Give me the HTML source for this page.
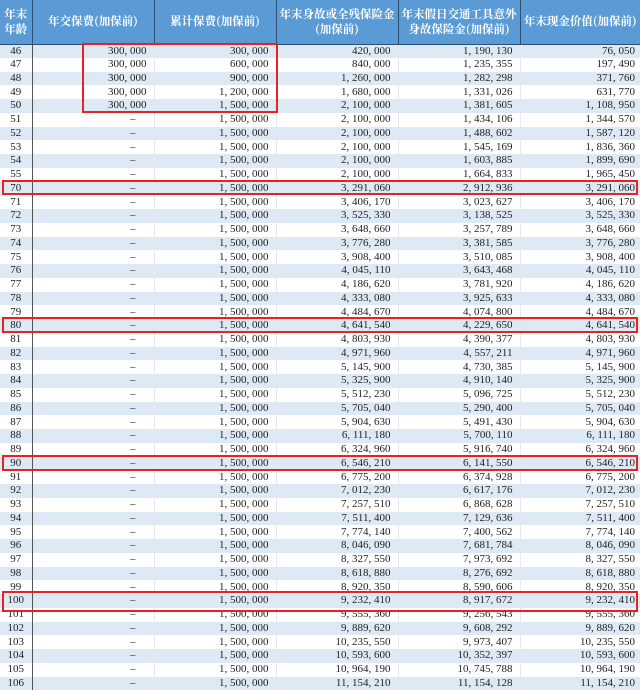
<!DOCTYPE html>
<html><head><meta charset="utf-8"><style>
*{margin:0;padding:0;box-sizing:border-box}
body{width:640px;height:688px;overflow:hidden;background:#fff;position:relative;font-family:"Liberation Serif","Noto Serif CJK SC",serif}
table{border-collapse:collapse;table-layout:fixed;position:absolute;left:0;top:0;width:640px}
th{background:#5b9bd5;color:#fff;font-family:"Noto Serif CJK SC","Liberation Serif",serif;font-size:11.5px;font-weight:bold;height:44px;line-height:15px;border-left:1px solid #2f4f75;border-bottom:1.5px solid #2f4f75;text-align:center}
th:first-child{border-left:none}
tr.r{height:13.75px}
td{height:13.75px;font-size:11px;line-height:11px;color:#222;text-align:right;padding:0 7px 0 0;border-left:1px solid #e4e8ee;white-space:nowrap;overflow:hidden;vertical-align:middle}
td:first-child{text-align:center;padding:0;border-left:none;border-right:1.5px solid #555}
td:nth-child(2){padding-right:18px}
tr:nth-child(even) td{background:#dde9f5}
td:last-child{padding-right:5px}
.b{position:absolute;border:2px solid #e8221f}
</style></head><body>
<table>
<colgroup><col style="width:32px"><col style="width:122px"><col style="width:122px"><col style="width:122px"><col style="width:122px"><col style="width:120px"></colgroup>
<tr><th>年末<br>年龄</th><th>年交保费(加保前)</th><th>累计保费(加保前)</th><th>年末身故或全残保险金<br>(加保前)</th><th>年末假日交通工具意外<br>身故保险金(加保前)</th><th>年末现金价值(加保前)</th></tr>
<tr class="r"><td>46</td><td style="padding-right:7px">300, 000</td><td>300, 000</td><td>420, 000</td><td>1, 190, 130</td><td>76, 050</td></tr>
<tr class="r"><td>47</td><td style="padding-right:7px">300, 000</td><td>600, 000</td><td>840, 000</td><td>1, 235, 355</td><td>197, 490</td></tr>
<tr class="r"><td>48</td><td style="padding-right:7px">300, 000</td><td>900, 000</td><td>1, 260, 000</td><td>1, 282, 298</td><td>371, 760</td></tr>
<tr class="r"><td>49</td><td style="padding-right:7px">300, 000</td><td>1, 200, 000</td><td>1, 680, 000</td><td>1, 331, 026</td><td>631, 770</td></tr>
<tr class="r"><td>50</td><td style="padding-right:7px">300, 000</td><td>1, 500, 000</td><td>2, 100, 000</td><td>1, 381, 605</td><td>1, 108, 950</td></tr>
<tr class="r"><td>51</td><td>–</td><td>1, 500, 000</td><td>2, 100, 000</td><td>1, 434, 106</td><td>1, 344, 570</td></tr>
<tr class="r"><td>52</td><td>–</td><td>1, 500, 000</td><td>2, 100, 000</td><td>1, 488, 602</td><td>1, 587, 120</td></tr>
<tr class="r"><td>53</td><td>–</td><td>1, 500, 000</td><td>2, 100, 000</td><td>1, 545, 169</td><td>1, 836, 360</td></tr>
<tr class="r"><td>54</td><td>–</td><td>1, 500, 000</td><td>2, 100, 000</td><td>1, 603, 885</td><td>1, 899, 690</td></tr>
<tr class="r"><td>55</td><td>–</td><td>1, 500, 000</td><td>2, 100, 000</td><td>1, 664, 833</td><td>1, 965, 450</td></tr>
<tr class="r"><td>70</td><td>–</td><td>1, 500, 000</td><td>3, 291, 060</td><td>2, 912, 936</td><td>3, 291, 060</td></tr>
<tr class="r"><td>71</td><td>–</td><td>1, 500, 000</td><td>3, 406, 170</td><td>3, 023, 627</td><td>3, 406, 170</td></tr>
<tr class="r"><td>72</td><td>–</td><td>1, 500, 000</td><td>3, 525, 330</td><td>3, 138, 525</td><td>3, 525, 330</td></tr>
<tr class="r"><td>73</td><td>–</td><td>1, 500, 000</td><td>3, 648, 660</td><td>3, 257, 789</td><td>3, 648, 660</td></tr>
<tr class="r"><td>74</td><td>–</td><td>1, 500, 000</td><td>3, 776, 280</td><td>3, 381, 585</td><td>3, 776, 280</td></tr>
<tr class="r"><td>75</td><td>–</td><td>1, 500, 000</td><td>3, 908, 400</td><td>3, 510, 085</td><td>3, 908, 400</td></tr>
<tr class="r"><td>76</td><td>–</td><td>1, 500, 000</td><td>4, 045, 110</td><td>3, 643, 468</td><td>4, 045, 110</td></tr>
<tr class="r"><td>77</td><td>–</td><td>1, 500, 000</td><td>4, 186, 620</td><td>3, 781, 920</td><td>4, 186, 620</td></tr>
<tr class="r"><td>78</td><td>–</td><td>1, 500, 000</td><td>4, 333, 080</td><td>3, 925, 633</td><td>4, 333, 080</td></tr>
<tr class="r"><td>79</td><td>–</td><td>1, 500, 000</td><td>4, 484, 670</td><td>4, 074, 800</td><td>4, 484, 670</td></tr>
<tr class="r"><td>80</td><td>–</td><td>1, 500, 000</td><td>4, 641, 540</td><td>4, 229, 650</td><td>4, 641, 540</td></tr>
<tr class="r"><td>81</td><td>–</td><td>1, 500, 000</td><td>4, 803, 930</td><td>4, 390, 377</td><td>4, 803, 930</td></tr>
<tr class="r"><td>82</td><td>–</td><td>1, 500, 000</td><td>4, 971, 960</td><td>4, 557, 211</td><td>4, 971, 960</td></tr>
<tr class="r"><td>83</td><td>–</td><td>1, 500, 000</td><td>5, 145, 900</td><td>4, 730, 385</td><td>5, 145, 900</td></tr>
<tr class="r"><td>84</td><td>–</td><td>1, 500, 000</td><td>5, 325, 900</td><td>4, 910, 140</td><td>5, 325, 900</td></tr>
<tr class="r"><td>85</td><td>–</td><td>1, 500, 000</td><td>5, 512, 230</td><td>5, 096, 725</td><td>5, 512, 230</td></tr>
<tr class="r"><td>86</td><td>–</td><td>1, 500, 000</td><td>5, 705, 040</td><td>5, 290, 400</td><td>5, 705, 040</td></tr>
<tr class="r"><td>87</td><td>–</td><td>1, 500, 000</td><td>5, 904, 630</td><td>5, 491, 430</td><td>5, 904, 630</td></tr>
<tr class="r"><td>88</td><td>–</td><td>1, 500, 000</td><td>6, 111, 180</td><td>5, 700, 110</td><td>6, 111, 180</td></tr>
<tr class="r"><td>89</td><td>–</td><td>1, 500, 000</td><td>6, 324, 960</td><td>5, 916, 740</td><td>6, 324, 960</td></tr>
<tr class="r"><td>90</td><td>–</td><td>1, 500, 000</td><td>6, 546, 210</td><td>6, 141, 550</td><td>6, 546, 210</td></tr>
<tr class="r"><td>91</td><td>–</td><td>1, 500, 000</td><td>6, 775, 200</td><td>6, 374, 928</td><td>6, 775, 200</td></tr>
<tr class="r"><td>92</td><td>–</td><td>1, 500, 000</td><td>7, 012, 230</td><td>6, 617, 176</td><td>7, 012, 230</td></tr>
<tr class="r"><td>93</td><td>–</td><td>1, 500, 000</td><td>7, 257, 510</td><td>6, 868, 628</td><td>7, 257, 510</td></tr>
<tr class="r"><td>94</td><td>–</td><td>1, 500, 000</td><td>7, 511, 400</td><td>7, 129, 636</td><td>7, 511, 400</td></tr>
<tr class="r"><td>95</td><td>–</td><td>1, 500, 000</td><td>7, 774, 140</td><td>7, 400, 562</td><td>7, 774, 140</td></tr>
<tr class="r"><td>96</td><td>–</td><td>1, 500, 000</td><td>8, 046, 090</td><td>7, 681, 784</td><td>8, 046, 090</td></tr>
<tr class="r"><td>97</td><td>–</td><td>1, 500, 000</td><td>8, 327, 550</td><td>7, 973, 692</td><td>8, 327, 550</td></tr>
<tr class="r"><td>98</td><td>–</td><td>1, 500, 000</td><td>8, 618, 880</td><td>8, 276, 692</td><td>8, 618, 880</td></tr>
<tr class="r"><td>99</td><td>–</td><td>1, 500, 000</td><td>8, 920, 350</td><td>8, 590, 606</td><td>8, 920, 350</td></tr>
<tr class="r"><td>100</td><td>–</td><td>1, 500, 000</td><td>9, 232, 410</td><td>8, 917, 672</td><td>9, 232, 410</td></tr>
<tr class="r"><td>101</td><td>–</td><td>1, 500, 000</td><td>9, 555, 360</td><td>9, 256, 543</td><td>9, 555, 360</td></tr>
<tr class="r"><td>102</td><td>–</td><td>1, 500, 000</td><td>9, 889, 620</td><td>9, 608, 292</td><td>9, 889, 620</td></tr>
<tr class="r"><td>103</td><td>–</td><td>1, 500, 000</td><td>10, 235, 550</td><td>9, 973, 407</td><td>10, 235, 550</td></tr>
<tr class="r"><td>104</td><td>–</td><td>1, 500, 000</td><td>10, 593, 600</td><td>10, 352, 397</td><td>10, 593, 600</td></tr>
<tr class="r"><td>105</td><td>–</td><td>1, 500, 000</td><td>10, 964, 190</td><td>10, 745, 788</td><td>10, 964, 190</td></tr>
<tr class="r"><td>106</td><td>–</td><td>1, 500, 000</td><td>11, 154, 210</td><td>11, 154, 128</td><td>11, 154, 210</td></tr>
</table>
<div class="b" style="left:82px;top:43px;width:196px;height:70px"></div>
<div class="b" style="left:2px;top:180px;width:636px;height:15px"></div>
<div class="b" style="left:2px;top:317px;width:636px;height:16px"></div>
<div class="b" style="left:2px;top:455px;width:636px;height:16px"></div>
<div class="b" style="left:2px;top:591px;width:636px;height:21px"></div>
</body></html>
